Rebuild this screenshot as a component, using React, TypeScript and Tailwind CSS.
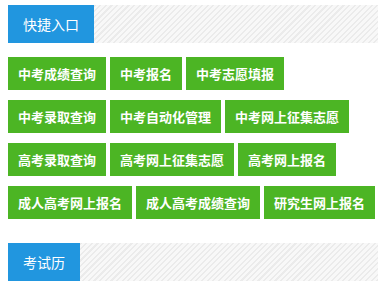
const quickLinks = [
  '中考成绩查询',
  '中考报名',
  '中考志愿填报',
  '中考录取查询',
  '中考自动化管理',
  '中考网上征集志愿',
  '高考录取查询',
  '高考网上征集志愿',
  '高考网上报名',
  '成人高考网上报名',
  '成人高考成绩查询',
  '研究生网上报名',
]

function SectionTitle({ title }: { title: string }) {
  return (
    <div className="flex h-[38px]">
      <div className="flex items-center bg-[#2196df] px-[15px] text-[14px] leading-none text-white">
        {title}
      </div>
      <div className="flex-1 bg-[repeating-linear-gradient(135deg,#ebebeb_0px,#ebebeb_1.5px,#f8f8f8_1.5px,#f8f8f8_4px)]" />
    </div>
  )
}

export default function App() {
  return (
    <div
      className="w-[385px] h-[285px] bg-white pl-[8px] pt-[5px]"
      style={{ fontFamily: '"Microsoft YaHei", "Noto Sans CJK SC", sans-serif' }}
    >
      <div className="w-[370px]">
        <SectionTitle title="快捷入口" />
        <div className="mt-[14px] flex flex-wrap gap-x-[4px] gap-y-[10px]">
          {quickLinks.map((link) => (
            <a
              key={link}
              href="#"
              className="flex h-[33px] items-center bg-[#4cb524] px-[10px] text-[13px] font-bold leading-none text-white"
            >
              {link}
            </a>
          ))}
        </div>
        <div className="mt-[24px]">
          <SectionTitle title="考试历" />
        </div>
      </div>
    </div>
  )
}
